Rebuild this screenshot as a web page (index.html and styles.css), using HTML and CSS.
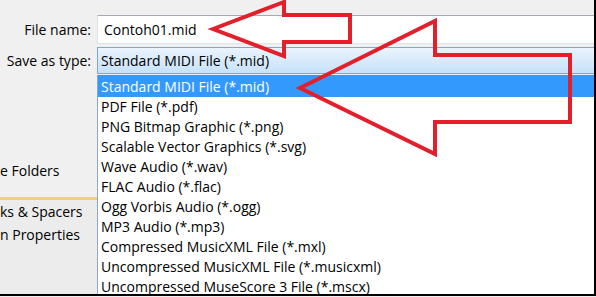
FILE: index.html
```html
<!DOCTYPE html>
<html lang="en">
<head>
    <meta charset="UTF-8">
    <title>Save As</title>
    <link rel="stylesheet" href="styles.css">
</head>
<body>
    <div class="frame">
        <div class="field-row name-row">
            <div class="label">File name:</div>
            <div class="input">Contoh01.mid</div>
        </div>
        <div class="field-row type-row">
            <div class="label">Save as type:</div>
            <div class="combo">Standard MIDI File (*.mid)</div>
        </div>
        <div class="lower">
            <div class="pane">
                <div class="dialog-part">
                    <div class="pane-text">e Folders</div>
                </div>
                <div class="palette">
                    <div class="pane-text spacers">ks &amp; Spacers</div>
                    <div class="pane-text">n Properties</div>
                </div>
            </div>
            <ul class="list">
                <li class="item selected">Standard MIDI File (*.mid)</li>
                <li class="item">PDF File (*.pdf)</li>
                <li class="item">PNG Bitmap Graphic (*.png)</li>
                <li class="item">Scalable Vector Graphics (*.svg)</li>
                <li class="item">Wave Audio (*.wav)</li>
                <li class="item">FLAC Audio (*.flac)</li>
                <li class="item">Ogg Vorbis Audio (*.ogg)</li>
                <li class="item">MP3 Audio (*.mp3)</li>
                <li class="item">Compressed MusicXML File (*.mxl)</li>
                <li class="item">Uncompressed MusicXML File (*.musicxml)</li>
                <li class="item">Uncompressed MuseScore 3 File (*.mscx)</li>
            </ul>
        </div>

        <!-- Red annotation arrows -->
        <svg class="arrows" width="596" height="297" viewBox="0 0 596 297">
            <polygon points="213,29 284,2 284,15 350,15 350,42 284,42 284,56" />
            <polygon points="300,88 435,21 435,55 570,55 570,122 435,122 435,154" />
        </svg>
    </div>
</body>
</html>
```
FILE: styles.css
```css
body {
    margin: 0;
    padding: 0;
    font-family: 'Open Sans', sans-serif;
    font-size: 14px;
    color: #000;
    background-color: #f0f0f0;
}

.frame {
    position: relative;
    width: 594px;
    height: 294px;
    border-right: 2px solid #000;
    border-bottom: 2px solid #000;
    background-color: #f0f0f0;
    overflow: hidden;
    display: flex;
    flex-direction: column;
}

.field-row {
    display: flex;
    align-items: center;
}

.label {
    width: 91px;
    flex-shrink: 0;
    text-align: right;
    padding-right: 6px;
}

.name-row {
    margin-top: 15px;
    height: 29px;
}

.input {
    flex: 1;
    height: 27px;
    line-height: 27px;
    padding-left: 6px;
    background-color: #fff;
    border: 1px solid #dfe3e8;
    border-top-color: #a8abb2;
    border-right: none;
}

.type-row {
    margin-top: 3px;
    height: 27px;
}

.combo {
    flex: 1;
    height: 25px;
    line-height: 25px;
    padding-left: 3px;
    border: 1px solid #7fa6d0;
    border-right: none;
    background: linear-gradient(#eaf4fd, #c6e1f9);
}

.lower {
    flex: 1;
    display: flex;
    min-height: 0;
}

.pane {
    width: 97px;
    flex-shrink: 0;
    display: flex;
    flex-direction: column;
}

.dialog-part {
    height: 126px;
    border-bottom: 3px solid #f1d26c;
    display: flex;
    flex-direction: column;
    justify-content: flex-end;
    padding-bottom: 15px;
    box-sizing: border-box;
}

.palette {
    flex: 1;
    background-color: #ececec;
}

.pane-text {
    white-space: nowrap;
    line-height: 22px;
}

.spacers {
    line-height: 24px;
}

.list {
    flex: 1;
    margin: 0;
    padding: 0;
    list-style: none;
    background-color: #fff;
    border-left: 1px solid #8fa7c6;
    margin-top: 1px;
}

.item {
    height: 20px;
    line-height: 20px;
    padding-left: 3px;
    white-space: nowrap;
}

.item.selected {
    height: 22px;
    line-height: 23px;
    background-color: #3399fd;
    color: #fff;
}

/* Annotation overlay */
.arrows {
    position: absolute;
    top: 0;
    left: 0;
    pointer-events: none;
}

.arrows polygon {
    fill: none;
    stroke: #e21f2b;
    stroke-width: 4;
    stroke-linejoin: miter;
    stroke-miterlimit: 10;
}
```
